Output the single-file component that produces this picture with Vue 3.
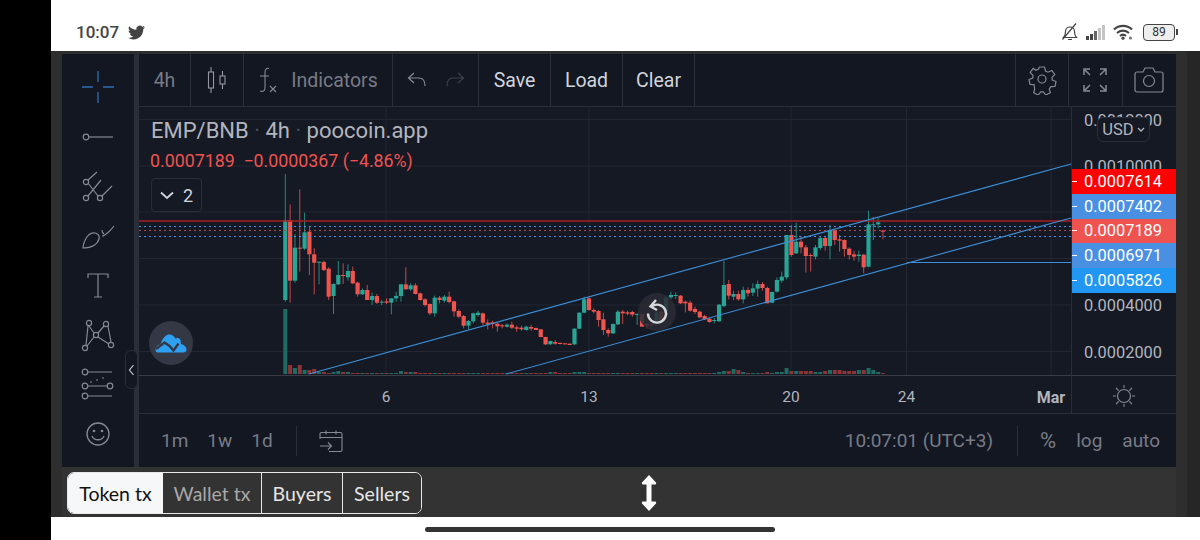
<script setup>
// candles: [bodyTop, bodyBottom, wickTop, wickBottom, up?] in 3x chart coords
const raw = [
  [180,420,42,425,1],[180,362,133,428,0],[263,362,222,368,1],[263,266,88,335,0],[217,266,158,270,1],
  [215,283,200,345,0],[283,308,265,403,0],[305,308,305,373,1],[306,330,302,333,0],[326,410,322,420,0],
  [372,408,370,462,1],[345,373,303,375,1],[345,348,310,372,0],[333,352,313,362,1],[333,370,320,372,0],
  [368,403,365,410,0],[390,403,385,405,1],[390,420,375,420,0],[408,420,398,435,1],[408,428,402,432,0],
  [425,428,420,435,1],[424,428,415,432,0],[415,428,415,463,1],[408,415,395,425,1],[373,408,372,425,1],
  [373,388,322,388,0],[376,388,370,392,1],[376,402,370,403,0],[400,420,398,422,0],[418,435,415,440,0],
  [432,460,430,465,0],[413,460,407,470,1],[413,420,408,430,0],[410,422,405,428,1],[410,426,395,430,0],
  [424,454,422,470,0],[453,470,448,475,0],[468,497,465,505,0],[483,497,480,508,1],[460,484,458,490,1],
  [458,465,452,470,1],[460,488,458,495,0],[488,493,478,508,0],[487,492,482,505,0],[491,499,488,515,0],
  [496,499,492,505,0],[494,500,490,503,1],[494,503,485,507,0],[502,506,497,515,0],[503,508,497,512,0],
  [500,510,497,512,1],[501,506,495,512,0],[504,510,503,510,0],[508,531,507,532,0],[531,553,530,555,0],
  [543,553,542,554,1],[546,551,540,554,0],[549,552,547,553,0],[550,553,550,553,0],[551,555,551,555,0],
  [506,553,505,555,1],[458,506,457,507,1],[418,458,410,460,1],[415,450,412,452,0],[450,455,445,460,0],
  [453,480,450,500,0],[478,510,458,525,0],[510,520,505,530,0],[492,520,490,522,1],[455,493,450,495,1],
  [455,460,450,492,0],[457,461,452,466,0],[456,464,452,470,0],[462,465,460,495,1],[462,500,460,500,0],
  [492,497,490,505,0],[492,496,488,500,0],[458,490,455,490,1],[455,480,450,485,0],[413,465,412,470,1],
  [405,412,395,418,1],[405,408,397,417,1],[407,430,405,432,0],[425,430,422,457,0],[428,452,422,455,0],
  [447,456,440,462,0],[455,472,452,475,0],[468,478,464,480,0],[476,486,473,488,0],[480,483,474,490,1],
  [434,484,432,485,1],[375,438,302,442,1],[372,407,360,418,0],[402,410,392,420,1],[402,418,392,422,0],
  [390,418,380,430,1],[390,400,382,410,0],[385,398,370,408,1],[372,386,362,410,1],[372,384,366,392,0],
  [384,430,380,430,0],[396,428,395,430,1],[360,395,352,398,1],[350,362,335,368,1],[225,352,225,358,1],
  [225,285,195,290,0],[245,280,188,282,1],[245,262,228,280,0],[262,288,255,338,0],[285,288,280,335,0],
  [262,290,255,298,1],[234,264,230,270,1],[234,258,230,272,0],[210,258,195,298,1],[210,240,208,255,0],
  [238,242,225,275,0],[240,267,238,290,0],[266,285,262,298,0],[283,290,272,302,0],[284,288,272,305,1],
  [284,322,282,340,0],[193,320,152,322,1],[193,196,170,240,1],[187,193,175,205,1],[212,215,210,238,0]
]

const candles = raw.map((c, i) => ({
  x: 285.3 + 4.82 * i,
  top: 160 + c[0] / 3,
  h: Math.max((c[1] - c[0]) / 3, 1),
  wt: 160 + c[2] / 3,
  wb: 160 + c[3] / 3,
  color: c[4] ? '#29a596' : '#f0544f'
}))

const volOverride = {
  0: 65, 1: 9, 2: 6, 3: 9, 4: 4, 5: 4, 6: 5, 7: 2, 8: 2, 10: 2, 11: 3, 12: 2, 13: 2, 24: 3, 25: 2, 26: 2, 27: 2,
  55: 2, 56: 2, 60: 2, 61: 2, 62: 2, 90: 2, 91: 3, 92: 3, 93: 5, 94: 4, 95: 2, 100: 2, 102: 2, 103: 2, 104: 6,
  105: 3, 106: 3, 107: 3, 108: 3, 109: 3, 110: 2, 111: 2, 112: 3, 113: 4, 114: 4, 115: 4, 116: 3, 117: 3,
  118: 3, 119: 4, 120: 4, 121: 6, 122: 4, 123: 2, 124: 1
}
const volumes = raw.map((c, i) => {
  const h = volOverride[i] || 1
  return { x: 285.3 + 4.82 * i, h, y: 374 - h, color: c[4] ? '#1f6a63' : '#8c3537' }
})

const gridY = [119.5, 166, 212, 258.5, 305, 351.5]
const gridX = [386, 589, 791, 906.5, 1051]

const ticks = [
  { label: '0.0012000', y: 120 },
  { label: '0.0010000', y: 166 },
  { label: '0.0004000', y: 305 },
  { label: '0.0002000', y: 352 }
]
const tags = [
  { label: '0.0007614', color: '#ff0000' },
  { label: '0.0007402', color: '#4a90e2' },
  { label: '0.0007189', color: '#ef5350' },
  { label: '0.0006971', color: '#4a90e2' },
  { label: '0.0005826', color: '#2196f3' }
]
const dates = [
  { label: '6', x: 386 },
  { label: '13', x: 589 },
  { label: '20', x: 791 },
  { label: '24', x: 906.5 },
  { label: 'Mar', x: 1051, bold: true }
]
const tabs = ['Token tx', 'Wallet tx', 'Buyers', 'Sellers']
</script>

<template>
  <div class="page">
    <div class="bezel"></div>
    <div class="phone">
      <div class="status">
        <span class="clock">10:07</span>
        <svg class="bird" viewBox="0 0 24 24"><path fill="#444" d="M23.953 4.57a10 10 0 01-2.825.775 4.958 4.958 0 002.163-2.723c-.951.555-2.005.959-3.127 1.184a4.92 4.92 0 00-8.384 4.482C7.69 8.095 4.067 6.13 1.64 3.162a4.822 4.822 0 00-.666 2.475c0 1.71.87 3.213 2.188 4.096a4.904 4.904 0 01-2.228-.616v.06a4.923 4.923 0 003.946 4.827 4.996 4.996 0 01-2.212.085 4.936 4.936 0 004.604 3.417 9.867 9.867 0 01-6.102 2.105c-.39 0-.779-.023-1.17-.067a13.995 13.995 0 007.557 2.209c9.053 0 13.998-7.496 13.998-13.985 0-.21 0-.42-.015-.63A9.935 9.935 0 0024 4.59z"/></svg>
        <div class="status-right">
          <svg width="18" height="18" viewBox="0 0 18 18" fill="none" stroke="#444" stroke-width="1.2"><path d="M2.5 14.5h13c-1.5-1.5-2-3-2-6 0-2.8-2-4.500-4.500-4.500S4.500 5.700 4.500 8.500c0 2.500-.5 4.500-2 6zM7 16.500h4M1.500 16.500 15 .5"/></svg>
          <svg width="20" height="15" viewBox="0 0 20 15"><rect x="0" y="11" width="3" height="4" fill="#444"/><rect x="4" y="9" width="3" height="6" fill="#444"/><rect x="8" y="6" width="3" height="9" fill="#666"/><rect x="12" y="3" width="3" height="12" fill="#c4c4c4"/><rect x="16" y="0" width="3" height="15" fill="#c4c4c4"/></svg>
          <svg width="21" height="16" viewBox="0 0 21 16" fill="none" stroke="#444" stroke-width="2.2"><path d="M1 5.500c5-4.800 13-4.800 18 0M4 9c3.400-3.200 8.600-3.200 12 0M7 12c1.700-1.500 4.300-1.500 6 0"/><circle cx="10" cy="14.200" r="1.600" fill="#444" stroke="none"/><circle cx="17.500" cy="14" r="1.600" fill="#777" stroke="none"/></svg>
          <div class="battery"><span>89</span></div>
        </div>
      </div>

      <div class="app">
        <div class="app-main">
          <div class="widget">
            <div class="side">
              <svg class="tool" viewBox="0 0 34 34" fill="none" stroke="#2e6db4" stroke-width="1.300"><path d="M17 1v11M17 22v11M1 17h11M22 17h11"/></svg>
              <svg class="tool" viewBox="0 0 34 34" fill="none" stroke="#868993" stroke-width="1.200"><circle cx="5" cy="17" r="2.800"/><path d="M8 17h24"/></svg>
              <svg class="tool" viewBox="0 0 34 34" fill="none" stroke="#868993" stroke-width="1.200"><circle cx="5" cy="13" r="2.600"/><circle cx="5" cy="29" r="2.600"/><circle cx="19" cy="29" r="2.600"/><path d="M7 11 16 3M7 14l10 13M7 27 20 11M21 27l10-10"/></svg>
              <svg class="tool" viewBox="0 0 34 34" fill="none" stroke="#868993" stroke-width="1.200"><path d="M2 29c1-9 6-16 12-15 3 .5 5 3 4 6-1.500 5-7 9-16 9zM21 17c3 0 9-6 12-10M21 11c0 2 .5 3 2 4"/></svg>
              <svg class="tool" viewBox="0 0 34 34" fill="none" stroke="#868993" stroke-width="1.200"><path d="M7 10V6h20v4M7 6h20M17 6v23M13 29h8"/></svg>
              <svg class="tool" viewBox="0 0 34 34" fill="none" stroke="#868993" stroke-width="1.200"><circle cx="8" cy="5" r="2.600"/><circle cx="25" cy="6" r="2.600"/><circle cx="15" cy="17" r="2.600"/><circle cx="4" cy="30" r="2.600"/><circle cx="30" cy="27" r="2.600"/><path d="M7 8 5 27M8 8l5 7M23 8l-6 7M13 19l-7 9M27 8l3 16M17 19l11 7"/></svg>
              <svg class="tool" viewBox="0 0 34 34" fill="none" stroke="#868993" stroke-width="1.200"><circle cx="4" cy="5" r="2.800"/><circle cx="4" cy="19" r="2.800"/><circle cx="4" cy="29" r="2.800"/><circle cx="29" cy="19" r="2.800"/><path d="M7 5h24M7 19h19M7 29h24"/><path d="M9 15h3M15 13h3M21 11h3" stroke-dasharray="2 2"/></svg>
              <svg class="tool" viewBox="0 0 34 34" fill="none" stroke="#868993" stroke-width="1.300"><circle cx="17" cy="17" r="11"/><circle cx="13" cy="14" r="1.300" fill="#868993" stroke="none"/><circle cx="21" cy="14" r="1.300" fill="#868993" stroke="none"/><path d="M11 19c2 5 10 5 12 0"/></svg>
              <div class="collapse">
                <svg width="7" height="12" viewBox="0 0 7 12" fill="none" stroke="#c8cad0" stroke-width="1.200"><path d="M5.500 1 1.500 6l4 5"/></svg>
              </div>
            </div>

            <div class="content">
              <div class="topbar">
                <div class="cell cell-4h">4h</div>
                <div class="cell cell-candle">
                  <svg width="20" height="28" viewBox="0 0 20 28" fill="none" stroke="#9598a1" stroke-width="1.100"><rect x="1.500" y="6" width="5" height="16"/><path d="M4 1v5M4 22v5"/><rect x="13" y="10" width="5" height="8"/><path d="M15.500 5v5M15.500 18v5"/></svg>
                </div>
                <div class="cell cell-ind">
                  <svg width="20" height="26" viewBox="0 0 20 26" fill="none" stroke="#868993" stroke-width="1.100"><path d="M11 1.500C8 .5 7 3 7 6v15c0 3-2 4-5 3M2 9h9M12 19l6 6M18 19l-6 6"/></svg>
                  <span>Indicators</span>
                </div>
                <div class="cell cell-undo">
                  <svg width="20" height="16" viewBox="0 0 20 16" fill="none" stroke="#868993" stroke-width="1.200"><path d="M7 1 1.500 6 7 11M1.500 6H12c4 0 6 3 6 8"/></svg>
                  <svg width="20" height="16" viewBox="0 0 20 16" fill="none" stroke="#3f424c" stroke-width="1.200"><path d="M13 1l5.500 5L13 11M18.500 6H8c-4 0-6 3-6 8"/></svg>
                </div>
                <div class="cell cell-action">Save</div>
                <div class="cell cell-action">Load</div>
                <div class="cell cell-action">Clear</div>
                <div class="top-spacer"></div>
                <div class="cell cell-icon">
                  <svg width="30" height="30" viewBox="0 0 30 30" fill="none" stroke="#868993" stroke-width="1.200"><path d="M12.500 2h5l1 4 2.500 1.200 3.800-1.800 3 4-2.800 3 .3 2.600 3.700 1.500-1 4.900-4 .2-1.700 2.300 1 3.900-4.500 2.200-2.500-3.200h-2.600l-2.500 3.200-4.500-2.200 1-3.900L7 19.600l-4-.2-1-4.900 3.700-1.500.3-2.600-2.800-3 3-4L9 5.200 11.500 4z"/><circle cx="15" cy="14" r="4"/></svg>
                </div>
                <div class="cell cell-icon">
                  <svg width="24" height="24" viewBox="0 0 24 24" fill="none" stroke="#868993" stroke-width="1.500"><path d="M1 7V1h6M1 1l6 6M17 1h6v6M23 1l-6 6M1 17v6h6M1 23l6-6M23 17v6h-6M23 23l-6-6"/></svg>
                </div>
                <div class="cell cell-icon cell-last">
                  <svg width="30" height="26" viewBox="0 0 30 26" fill="none" stroke="#868993" stroke-width="1.200"><path d="M3 5h6l2-4h8l2 4h6a2 2 0 012 2v16a2 2 0 01-2 2H3a2 2 0 01-2-2V7a2 2 0 012-2z"/><circle cx="15" cy="14" r="5.500"/></svg>
                </div>
              </div>

              <div class="chart">
                <svg class="plot" viewBox="139 107 1037 268">
                  <path v-for="y in gridY" :key="y" :d="`M139 ${y}H1071`" stroke="#232732" fill="none"/>
                  <path v-for="x in gridX" :key="x" :d="`M${x} 107V375`" stroke="#232732" fill="none"/>
                  <rect v-for="(v, i) in volumes" :key="'v' + i" :x="v.x - 2" :y="v.y" width="4" :height="v.h" :fill="v.color"/>
                  <g v-for="(c, i) in candles" :key="i">
                    <rect :x="c.x - 0.5" :y="c.wt" width="1" :height="c.wb - c.wt" :fill="c.color" opacity="0.8"/>
                    <rect :x="c.x - 2.1" :y="c.top" width="4.2" :height="c.h" :fill="c.color"/>
                  </g>
                  <path d="M139 221H1071" stroke="#a81d22" stroke-width="1.400" fill="none"/>
                  <path d="M139 226.500H1071M139 236.500H1071" stroke="#4a90e2" stroke-dasharray="2 3" fill="none"/>
                  <path d="M139 230.500H1071" stroke="#b0474a" stroke-dasharray="2 3" fill="none"/>
                  <path d="M309 374 1071 164M506 374 1071 218M907 262.500H1071" stroke="#3d8fd9" stroke-width="1.100" fill="none"/>
                </svg>

                <div class="price-scale">
                  <span v-for="t in ticks" :key="t.label" class="tick" :style="{ top: t.y - 107 + 'px' }">{{ t.label }}</span>
                  <div class="tags">
                    <div v-for="t in tags" :key="t.label" class="tag" :style="{ background: t.color }">
                      <i></i>{{ t.label }}
                    </div>
                  </div>
                </div>

                <div class="legend">
                  <div class="legend-title">EMP/BNB <em>·</em> 4h <em>·</em> poocoin.app</div>
                  <div class="legend-values">0.0007189&nbsp; −0.0000367 (−4.86%)</div>
                  <div class="legend-btn">
                    <svg width="14" height="9" viewBox="0 0 14 9" fill="none" stroke="#d1d4dc" stroke-width="1.800"><path d="M1 1.500 7 7l6-5.500"/></svg>
                    <span>2</span>
                  </div>
                </div>

                <div class="usd">USD
                  <svg width="8" height="5" viewBox="0 0 8 5" fill="none" stroke="#b2b5be" stroke-width="1.300"><path d="M1 1l3 3 3-3"/></svg>
                </div>

                <div class="logo">
                  <svg width="32" height="20" viewBox="0 0 32 20"><path fill="#2ea0f2" d="M2 19.500C.5 19 0 16.500 1 14.500c1-2 3-3 4.500-3C7 6 10 2 14 1.500c3-.3 5 1.500 6.500 4 1.500-1 4-.8 5 1.500.5 1.500.3 3 .3 4 3 .5 5.700 2.800 5.700 5.500 0 2-1.500 3-3 3z"/><path fill="none" stroke="#343844" stroke-width="2.400" d="M1 16l8.500-6.500 5 3.500 4 4.500 5-7"/></svg>
                </div>

                <div class="reset">
                  <svg width="24" height="26" viewBox="0 0 24 26" fill="none" stroke="#d6d7da" stroke-width="2.400"><path d="M6.500 7.500A9 9 0 1 1 3 14.500"/><path d="M11 1 5.500 7.500 12 11"/></svg>
                </div>
              </div>

              <div class="time-axis">
                <span v-for="d in dates" :key="d.label" class="date" :class="{ bold: d.bold }" :style="{ left: d.x - 139 + 'px' }">{{ d.label }}</span>
                <div class="sun">
                  <svg width="24" height="24" viewBox="0 0 24 24" fill="none" stroke="#868993" stroke-width="1.100"><circle cx="12" cy="12" r="6.500"/><path d="M12 1v3M12 20v3M1 12h3M20 12h3M4 4l2.500 2.500M20 4l-2.500 2.500M4 20l2.500-2.500M20 20l-2.500-2.500"/></svg>
                </div>
              </div>

              <div class="bottombar">
                <span class="range">1m</span>
                <span class="range">1w</span>
                <span class="range">1d</span>
                <div class="vsep vsep-left"></div>
                <svg width="24" height="22" viewBox="0 0 24 22" fill="none" stroke="#868993" stroke-width="1.100"><path d="M1 9V4a1.500 1.500 0 011.500-1.500h19A1.500 1.500 0 0123 4v16a1.500 1.500 0 01-1.500 1.500H10M1 7.500h22M7 .5v4M17 .5v4M1 16h11M9 12.500l3.500 3.500L9 19.500"/></svg>
                <div class="bottom-spacer"></div>
                <span class="clock-utc">10:07:01 (UTC+3)</span>
                <div class="vsep vsep-right"></div>
                <span class="opt opt-pct">%</span>
                <span class="opt opt-log">log</span>
                <span class="opt">auto</span>
              </div>
            </div>
          </div>

          <div class="tabs-row">
            <div class="tabs">
              <div v-for="(t, i) in tabs" :key="t" class="tab" :class="'tab-' + i">{{ t }}</div>
            </div>
            <svg class="resize" width="16" height="36" viewBox="0 0 16 36"><path fill="#fff" d="M8 0l7 7.500c.5 1-.2 2-1 2h-3.500v17H14c.9 0 1.500 1 1 2L8 36 1 28.500c-.5-1 .1-2 1-2h3.500v-17H2c-.8 0-1.500-1-1-2z"/></svg>
          </div>
        </div>
        <div class="app-edge"></div>
      </div>

      <div class="navbar"><div class="pill"></div></div>
    </div>
  </div>
</template>

<style scoped>
.page {
  display: flex;
  width: 1200px;
  height: 540px;
  overflow: hidden;
  background: #000;
  font-family: Roboto, sans-serif;
}

.bezel {
  width: 51px;
  flex: none;
}

.phone {
  flex: 1;
  display: flex;
  flex-direction: column;
  background: #fff;
}

.status {
  height: 51px;
  flex: none;
  display: flex;
  align-items: center;
  padding: 13px 25px 0 25px;
  box-sizing: border-box;
}

.clock {
  font-size: 17px;
  font-weight: 500;
  color: #444;
}

.bird {
  width: 17px;
  height: 17px;
  margin-left: 9px;
}

.status-right {
  margin-left: auto;
  display: flex;
  align-items: center;
  gap: 7px;
}

.battery {
  position: relative;
  width: 30px;
  height: 15px;
  margin-left: 2px;
  border: 1.5px solid #444;
  border-radius: 4px;
  display: flex;
  align-items: center;
  justify-content: center;
  font-size: 12px;
  color: #333;
  background: #eee;
}

.battery::after {
  content: '';
  position: absolute;
  right: -4px;
  top: 4px;
  width: 2px;
  height: 6px;
  background: #444;
}

.app {
  height: 466px;
  flex: none;
  display: flex;
  background: #262626;
}

.app-main {
  width: 1136px;
  flex: none;
  display: flex;
  flex-direction: column;
  padding: 3px 11px 0;
  box-sizing: border-box;
  background: #2e2e2e;
}

.app-edge {
  flex: 1;
}

.widget {
  height: 413px;
  flex: none;
  display: flex;
  background: #2a2e39;
}

.side {
  position: relative;
  width: 72px;
  flex: none;
  margin-right: 5px;
  display: flex;
  flex-direction: column;
  align-items: center;
  padding-top: 16px;
  gap: 15.5px;
  box-sizing: border-box;
  background: #131722;
}

.tool {
  width: 34px;
  height: 34px;
  flex: none;
}

.collapse {
  position: absolute;
  right: -4px;
  top: 296px;
  width: 11px;
  height: 37px;
  border: 1px solid #2a2e39;
  border-radius: 6px;
  background: #131722;
  display: flex;
  align-items: center;
  justify-content: center;
}

.content {
  flex: 1;
  display: flex;
  flex-direction: column;
  background: #151924;
  min-width: 0;
}

.topbar {
  height: 53px;
  flex: none;
  display: flex;
  border-bottom: 1px solid #2a2e39;
  box-sizing: border-box;
  background: #131722;
  font-size: 19.5px;
  color: #787b86;
}

.cell {
  display: flex;
  align-items: center;
  justify-content: center;
  border-right: 1px solid #2a2e39;
  box-sizing: border-box;
}

.cell-4h { width: 52px; }
.cell-candle { width: 53px; }
.cell-ind { width: 149px; gap: 13px; }
.cell-undo { width: 86px; gap: 18px; }
.cell-action { width: 72px; color: #d1d4dc; }
.top-spacer {
  flex: 1;
  border-right: 1px solid #2a2e39;
}
.cell-icon { width: 53.5px; }
.cell-last { border-right: none; }

.chart {
  position: relative;
  height: 268px;
  flex: none;
  border-bottom: 1px solid #3a3d46;
  margin-bottom: -1px;
}

.plot {
  position: absolute;
  left: 0;
  top: 0;
  width: 1037px;
  height: 268px;
  display: block;
}

.price-scale {
  position: absolute;
  right: 0;
  top: 0;
  bottom: 0;
  width: 105px;
  border-left: 1px solid #2a2e39;
  box-sizing: border-box;
}

.tick {
  position: absolute;
  left: 12px;
  transform: translateY(-50%);
  font-size: 16.4px;
  color: #b2b5be;
}

.tags {
  position: absolute;
  left: 0;
  top: 62px;
  width: 104px;
}

.tag {
  height: 24.8px;
  display: flex;
  align-items: center;
  font-size: 16.4px;
  color: #fff;
}

.tag i {
  width: 5px;
  height: 1px;
  margin-right: 7px;
  background: #fff;
}

.legend {
  position: absolute;
  left: 12px;
  top: 11px;
}

.legend-title {
  font-size: 22px;
  line-height: 26px;
  color: #b2b5be;
}

.legend-title em {
  font-style: normal;
  color: #4c4f59;
}

.legend-values {
  margin-top: 7px;
  margin-left: -1px;
  font-size: 17.8px;
  line-height: 20px;
  color: #ef5350;
}

.legend-btn {
  margin-top: 7px;
  width: 51px;
  height: 34px;
  border: 1px solid #2a2e39;
  border-radius: 4px;
  display: flex;
  align-items: center;
  justify-content: center;
  gap: 9px;
  font-size: 18px;
  color: #d1d4dc;
  box-sizing: border-box;
}

.usd {
  position: absolute;
  left: 958px;
  top: 10px;
  width: 53px;
  height: 25px;
  border: 1px solid #2a2e39;
  border-radius: 6px;
  background: #151924;
  box-sizing: border-box;
  display: flex;
  align-items: center;
  justify-content: center;
  gap: 3px;
  font-size: 16.5px;
  color: #b2b5be;
}

.logo {
  position: absolute;
  left: 10px;
  top: 214px;
  width: 44px;
  height: 44px;
  border-radius: 50%;
  background: #343844;
  display: flex;
  align-items: center;
  justify-content: center;
}

.reset {
  position: absolute;
  left: 499px;
  top: 186px;
  width: 38px;
  height: 38px;
  border-radius: 50%;
  background: rgba(42, 44, 52, 0.85);
  display: flex;
  align-items: center;
  justify-content: center;
}

.time-axis {
  position: relative;
  height: 38px;
  flex: none;
  border-bottom: 1px solid #2a2e39;
}

.date {
  position: absolute;
  top: 22px;
  transform: translate(-50%, -50%);
  font-size: 15.5px;
  color: #b2b5be;
}

.date.bold {
  font-weight: 700;
  font-size: 16px;
}

.sun {
  position: absolute;
  right: 0;
  top: 0;
  bottom: 0;
  width: 105px;
  padding-top: 3px;
  border-left: 1px solid #2a2e39;
  box-sizing: border-box;
  display: flex;
  align-items: center;
  justify-content: center;
}

.bottombar {
  flex: 1;
  display: flex;
  align-items: center;
  padding: 0 16px 0 22px;
  background: #131722;
  font-size: 19px;
  color: #787b86;
}

.range { margin-right: 19px; }
.range:nth-child(3) { margin-right: 0; }

.vsep {
  width: 1px;
  height: 30px;
  background: #2a2e39;
}

.vsep-left { margin: 0 22px 0 23px; }
.vsep-right { margin: 0 22px 0 24px; }

.bottom-spacer { flex: 1; }

.opt-pct { margin-right: 20px; font-size: 22px; }
.opt-log { margin-right: 20px; }

.tabs-row {
  flex: 1;
  background: #333;
  padding: 5px 0 0 5px;
  box-sizing: border-box;
  display: flex;
  align-items: flex-start;
}

.tabs {
  display: flex;
  height: 42px;
  border: 1px solid #e8e8e8;
  border-radius: 7px;
  overflow: hidden;
  box-sizing: border-box;
  font-family: Lato, sans-serif;
  font-size: 19.5px;
  color: #e6e6e6;
}

.tab {
  display: flex;
  align-items: center;
  justify-content: center;
  box-sizing: border-box;
  background: #333;
  border-left: 1px solid #e8e8e8;
}

.tab-0 {
  width: 95px;
  background: #f6f7f8;
  color: #111;
  border-left: none;
}

.tab-1 {
  width: 98px;
  color: #a8a8a8;
  border-left: none;
}

.tab-2 { width: 81px; }
.tab-3 { width: 79px; }

.resize {
  margin-left: 219px;
  margin-top: 3px;
}

.navbar {
  flex: 1;
  display: flex;
  justify-content: center;
  align-items: center;
}

.pill {
  width: 350px;
  height: 5px;
  margin-left: -51px;
  margin-top: 1px;
  border-radius: 3px;
  background: #333;
}
</style>
